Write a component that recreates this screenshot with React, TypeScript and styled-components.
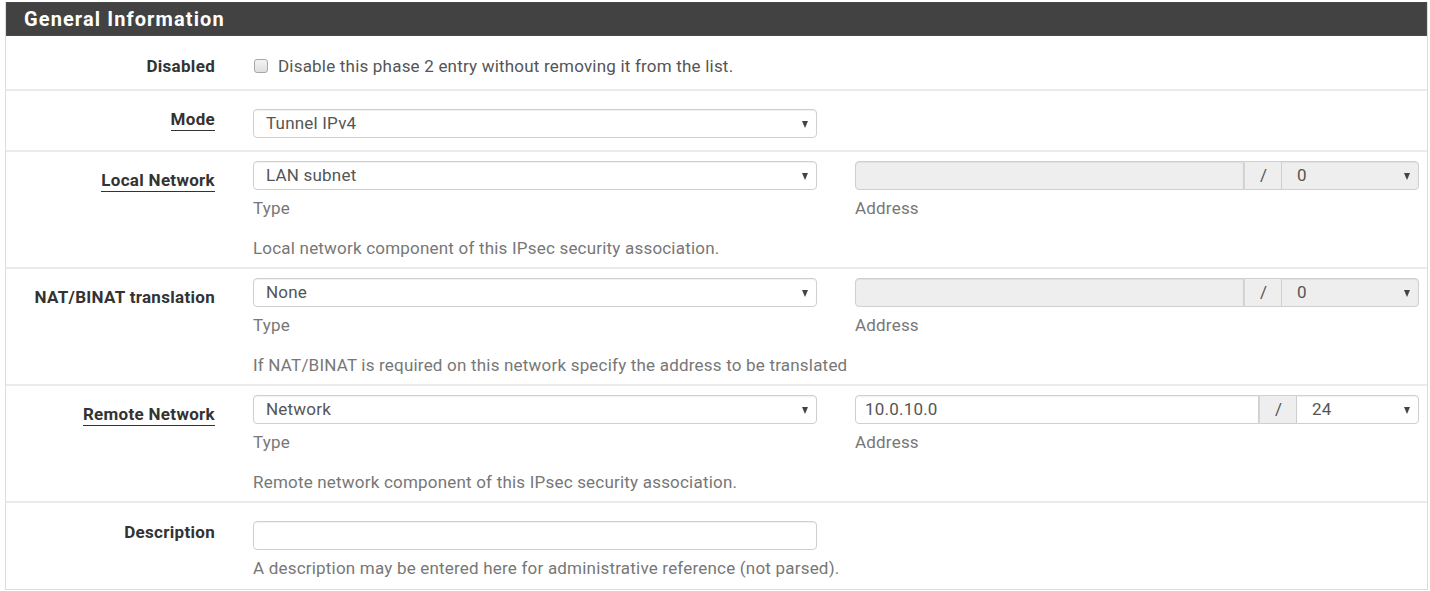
import React from "react";
import styled, { createGlobalStyle } from "styled-components";

const Global = createGlobalStyle`
  html, body { margin: 0; padding: 0; background: #fff; }
  body { font-family: Roboto, "Liberation Sans", Arial, sans-serif; font-size: 17px; letter-spacing: 0.2px; color: #555; }
  * { box-sizing: border-box; }
`;

const Panel = styled.section`
  margin: 2px 2px 0 5px;
  width: 1423px;
  border: 1px solid #dcdcdc;
  border-top: none;
  background: #fff;
`;

const Heading = styled.h2`
  margin: 0;
  height: 34px;
  background: #424242;
  color: #fff;
  font-size: 20px;
  font-weight: 700;
  line-height: 32px;
  padding-left: 17px;
  letter-spacing: 1.1px;
  border: 1px solid #4a4a4a;
`;

const Row = styled.div<{ $pt: number; $pb: number; $last?: boolean }>`
  display: flex;
  align-items: flex-start;
  padding-top: ${(p) => p.$pt}px;
  padding-bottom: ${(p) => p.$pb}px;
  border-bottom: ${(p) => (p.$last ? "none" : "2px solid #ebebeb")};
`;

const Label = styled.div<{ $offset: number }>`
  width: 209px;
  flex: none;
  text-align: right;
  font-weight: 700;
  color: #333;
  font-size: 17px;
  letter-spacing: 0.3px;
  line-height: 22px;
  margin-top: ${(p) => p.$offset}px;
  margin-right: 38px;
  white-space: nowrap;
`;

const Underlined = styled.span`
  border-bottom: 1.5px solid #333;
  padding-bottom: 1px;
`;

const Col = styled.div`
  width: 564px;
  flex: none;
  display: flex;
  flex-direction: column;
`;

const AddrCol = styled(Col)`
  margin-left: 38px;
`;

const CheckLine = styled.label`
  display: flex;
  align-items: center;
  gap: 10px;
  height: 22px;
  color: #555;
`;

const CheckBox = styled.span`
  width: 14px;
  height: 14px;
  margin-left: 1px;
  border: 1px solid #a8a8a8;
  border-radius: 3px;
  background: linear-gradient(#f4f4f4, #dedede);
`;

const SelectBox = styled.div<{ $disabled?: boolean; $width?: number; $grouped?: boolean }>`
  position: relative;
  height: 29px;
  width: ${(p) => (p.$width ? `${p.$width}px` : "100%")};
  flex: none;
  border: 1px solid #cfcfcf;
  border-radius: ${(p) => (p.$grouped ? "0 4px 4px 0" : "4px")};
  background: ${(p) => (p.$disabled ? "#eeeeee" : "#fff")};
  box-shadow: inset 0 1px 1px rgba(0, 0, 0, 0.06);
  padding-left: ${(p) => (p.$grouped ? 15 : 12)}px;
  line-height: 27px;
  color: #555;
  &::after {
    content: "";
    position: absolute;
    right: 8px;
    top: 11px;
    border-left: 3.5px solid transparent;
    border-right: 3.5px solid transparent;
    border-top: 7px solid #444;
  }
`;

const TextBox = styled.div<{ $disabled?: boolean; $grouped?: boolean }>`
  height: 29px;
  flex: ${(p) => (p.$grouped ? "1" : "none")};
  width: ${(p) => (p.$grouped ? "auto" : "100%")};
  border: 1px solid #cfcfcf;
  border-radius: ${(p) => (p.$grouped ? "4px 0 0 4px" : "4px")};
  background: ${(p) => (p.$disabled ? "#eeeeee" : "#fff")};
  box-shadow: inset 0 1px 1px rgba(0, 0, 0, 0.06);
  padding-left: 9px;
  line-height: 27px;
  color: #555;
`;

const Group = styled.div`
  display: flex;
  height: 29px;
`;

const Addon = styled.div`
  width: 38px;
  flex: none;
  height: 29px;
  background: #eeeeee;
  border-top: 1px solid #cfcfcf;
  border-bottom: 1px solid #cfcfcf;
  border-left: 1px solid #d6d6d6;
  text-align: center;
  line-height: 27px;
  color: #555;
  margin-right: -1px;
`;

const Hint = styled.div`
  margin-top: 7px;
  line-height: 22px;
  color: #777;
`;

const Help = styled.div<{ $mt: number }>`
  margin-top: ${(p) => p.$mt}px;
  line-height: 22px;
  color: #777;
  white-space: nowrap;
`;

type NetProps = {
  label: React.ReactNode;
  type: string;
  addr: string;
  mask: string;
  disabled?: boolean;
  maskWidth: number;
  help: string;
};

function NetworkRow({ label, type, addr, mask, disabled, maskWidth, help }: NetProps) {
  return (
    <Row $pt={9} $pb={8}>
      <Label $offset={8}>{label}</Label>
      <Col>
        <SelectBox>{type}</SelectBox>
        <Hint>Type</Hint>
        <Help $mt={18}>{help}</Help>
      </Col>
      <AddrCol>
        <Group>
          <TextBox $disabled={disabled} $grouped>
            {addr}
          </TextBox>
          <Addon>/</Addon>
          <SelectBox $disabled={disabled} $width={maskWidth} $grouped>
            {mask}
          </SelectBox>
        </Group>
        <Hint>Address</Hint>
      </AddrCol>
    </Row>
  );
}

export default function App() {
  return (
    <>
      <Global />
      <Panel>
        <Heading>General Information</Heading>
        <Row $pt={19} $pb={12}>
          <Label $offset={0}>Disabled</Label>
          <Col>
            <CheckLine>
              <CheckBox />
              Disable this phase 2 entry without removing it from the list.
            </CheckLine>
          </Col>
        </Row>
        <Row $pt={18} $pb={12}>
          <Label $offset={-1}>
            <Underlined>Mode</Underlined>
          </Label>
          <Col>
            <SelectBox>Tunnel IPv4</SelectBox>
          </Col>
        </Row>
        <NetworkRow
          label={<Underlined>Local Network</Underlined>}
          type="LAN subnet"
          addr=""
          mask="0"
          disabled
          maskWidth={138}
          help="Local network component of this IPsec security association."
        />
        <NetworkRow
          label="NAT/BINAT translation"
          type="None"
          addr=""
          mask="0"
          disabled
          maskWidth={138}
          help="If NAT/BINAT is required on this network specify the address to be translated"
        />
        <NetworkRow
          label={<Underlined>Remote Network</Underlined>}
          type="Network"
          addr="10.0.10.0"
          mask="24"
          maskWidth={123}
          help="Remote network component of this IPsec security association."
        />
        <Row $pt={18} $pb={10} $last>
          <Label $offset={0}>Description</Label>
          <Col>
            <TextBox />
            <Help $mt={7}>A description may be entered here for administrative reference (not parsed).</Help>
          </Col>
        </Row>
      </Panel>
    </>
  );
}
